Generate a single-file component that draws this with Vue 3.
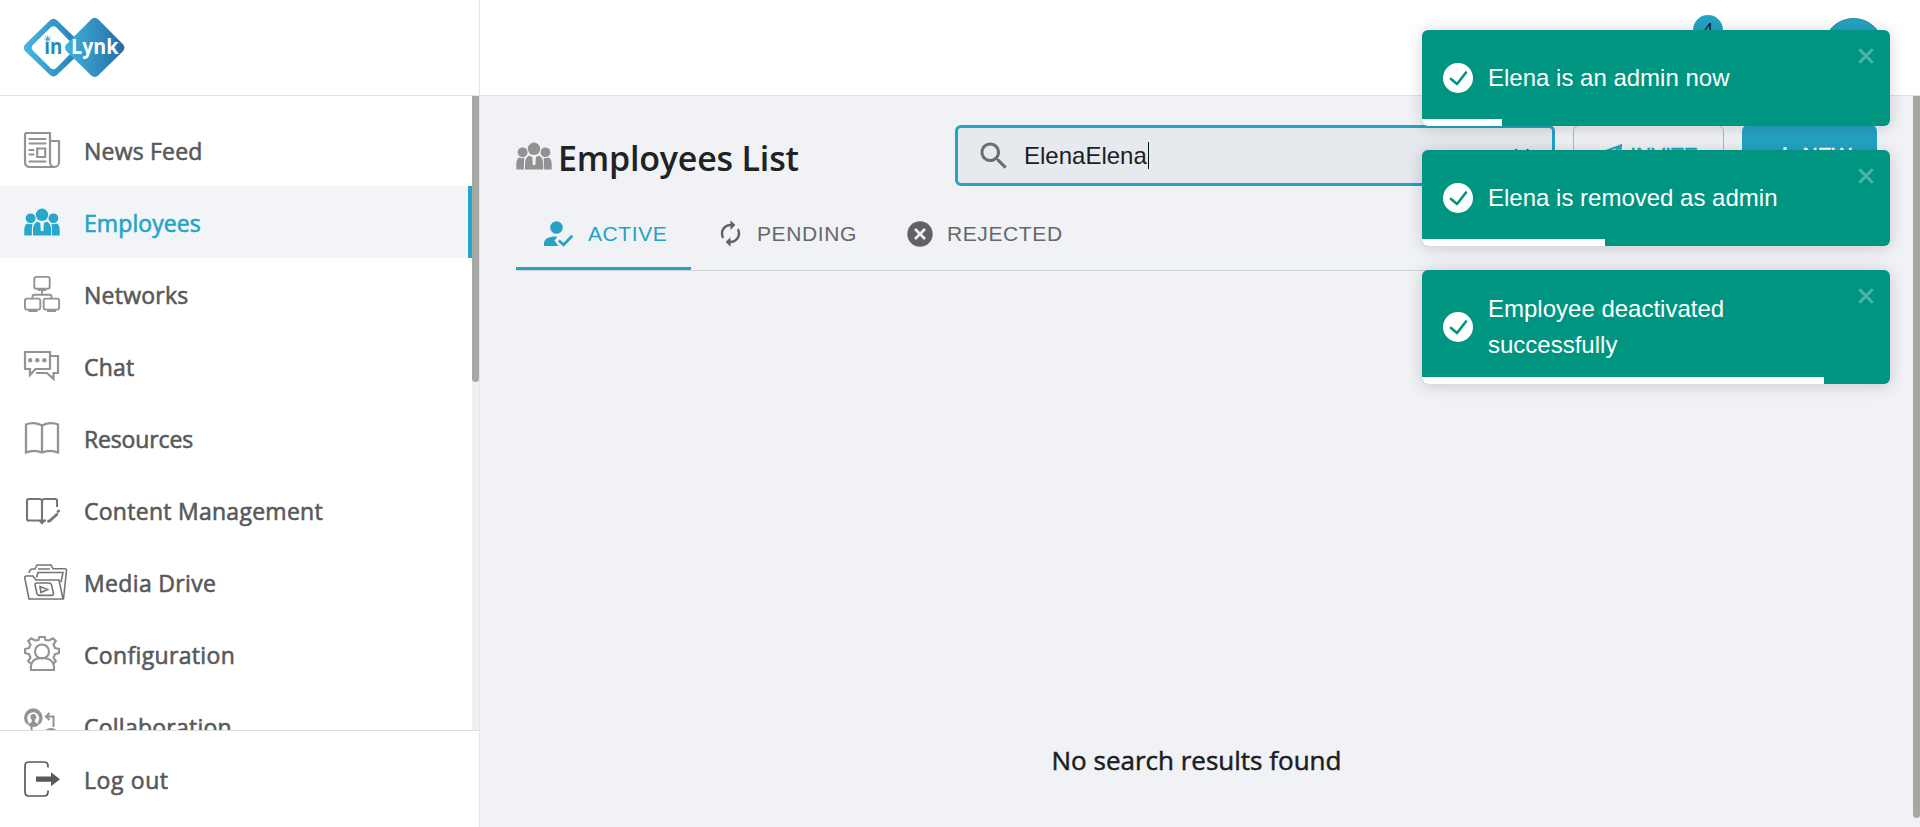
<script setup>
const nav = [
  { id: 'news', label: 'News Feed', ls: 0.2 },
  { id: 'people', label: 'Employees', ls: 0.08 },
  { id: 'net', label: 'Networks', ls: 0.25 },
  { id: 'chat', label: 'Chat', ls: 0.2 },
  { id: 'book', label: 'Resources', ls: -0.15 },
  { id: 'content', label: 'Content Management', ls: 0.27 },
  { id: 'media', label: 'Media Drive', ls: 0.35 },
  { id: 'config', label: 'Configuration', ls: 0.34 },
  { id: 'collab', label: 'Collaboration', ls: 0.24 },
]
const toasts = [
  { text: 'Elena is an admin now', bar: 80 },
  { text: 'Elena is removed as admin', bar: 183 },
  { text: 'Employee deactivated successfully', bar: 402 },
]
</script>

<template>
  <div class="app">
    <svg class="defs" width="0" height="0">
      <defs>
        <symbol id="people" viewBox="0 0 36 36">
          <g fill="currentColor">
            <circle cx="18" cy="10.8" r="6.2" /><circle cx="6.6" cy="14.3" r="4.9" /><circle cx="29.4" cy="14.3" r="4.9" />
            <path d="M.3 31.500V26c0-3.500 1.200-6 3.200-6.600 1.500 1 3.500 1 5 .3C8 22 7.900 25 7.900 31.500z" />
            <path d="M35.700 31.500V26c0-3.500-1.200-6-3.200-6.600-1.500 1-3.500 1-5 .3C28 22 28.100 25 28.100 31.500z" />
            <path d="M9 31.500V26.500c0-5 1.800-8 4.600-8.700l2.700 1.200.5 8h2.600l.5-8 2.700-1.200C25.400 18.500 27.200 21.500 27.200 26.500v5z" />
          </g>
        </symbol>
      </defs>
    </svg>
    <aside class="side">
      <div class="brand">
        <svg width="102" height="62" viewBox="0 0 102 62">
          <defs>
            <linearGradient id="g1" x1="0" x2="1"><stop offset="0" stop-color="#43b9df" /><stop offset="1" stop-color="#2778b1" /></linearGradient>
            <linearGradient id="g2" x1="0" x2="1"><stop offset="0" stop-color="#41b4db" /><stop offset="1" stop-color="#256ba6" /></linearGradient>
          </defs>
          <path d="M25.800 3.500q3.700-3.300 7.400 0L57.500 27q3.500 3.700 0 7.400L33.200 57.800q-3.700 3.300-7.400 0L1.500 34.400q-3.500-3.700 0-7.400z" fill="url(#g1)" />
          <path d="M26.600 10.500q2.900-2.500 5.800 0L49.500 28q2.300 2.700 0 5.400L32.400 51q-2.900 2.500-5.800 0L8.800 33.400q-2.300-2.700 0-5.400z" fill="#fff" />
          <path d="M67 2.500q3.700-3.500 7.400 0L98.700 27q3.500 3.700 0 7.400L74.400 58.200q-3.700 3.500-7.400 0L42.700 34.400q-3.500-3.700 0-7.400z" fill="url(#g2)" />
          <circle cx="23.600" cy="22" r="1.800" fill="#2b8fc2" />
          <path d="M23.600 18v8M19.800 22h7.600M21 19l5.300 6M26.300 19l-5.300 6" stroke="#69a9c9" stroke-width=".7" />
          <text x="20.300" y="36.500" class="logo in" textLength="18" lengthAdjust="spacingAndGlyphs">ın</text>
          <text x="47" y="36.500" class="logo" textLength="47.500" lengthAdjust="spacingAndGlyphs">Lynk</text>
        </svg>
      </div>
      <div class="navwrap">
        <nav>
          <a v-for="n in nav" :key="n.id" class="item" :class="{ active: n.id === 'people' }">
            <span class="ico">
              <svg v-if="n.id === 'news'" width="36" height="36" fill="none" stroke="currentColor" stroke-width="2.200">
                <path d="M1 1h25v29c0 3 2 5 4.500 5S35 33 35 30V9h-9M1 1v29c0 3 2 5 5 5h25" /><path d="M5.500 7h16M5.500 11.500h16M5.500 18h4M5.500 22.500h4M5.500 29.500h16M13.200 16.500h8v8.500h-8z" stroke-linecap="round" />
              </svg>
              <svg v-else-if="n.id === 'people'" width="36" height="36"><use href="#people" /></svg>
              <svg v-else-if="n.id === 'net'" width="36" height="36" fill="none" stroke="currentColor" stroke-width="1.900">
                <rect x="10.300" y=".9" width="15.400" height="11.800" rx="2" /><rect x=".9" y="22.600" width="15.400" height="11" rx="2" /><rect x="19.700" y="22.600" width="15.400" height="11" rx="2" /><path d="M14 14h8M18 14v5M8.500 22v-1.500q0-1.700 1.700-1.700h15.600q1.700 0 1.700 1.700V22M4.500 35h9M23 35h9" />
              </svg>
              <svg v-else-if="n.id === 'chat'" width="36" height="36" fill="none" stroke="currentColor" stroke-width="2.200">
                <path d="M1 4h25v17H11.500L6 27v-6H1zM27 8h7v17h-4.500v6L23 25H12" /><g fill="currentColor" stroke="none"><circle cx="6.200" cy="12.300" r="2.200" /><circle cx="13.300" cy="12.300" r="2.200" /><circle cx="20.400" cy="12.300" r="2.200" /></g>
              </svg>
              <svg v-else-if="n.id === 'book'" width="36" height="36" fill="none" stroke="currentColor" stroke-width="2.300">
                <path d="M18 5.500C13 2.500 6 2.500 2 4.500v28c5-2 11-2 16 0 5-2 11-2 16 0V4.500C30 2.500 23 2.500 18 5.500zv27" />
              </svg>
              <svg v-else-if="n.id === 'content'" class="dark" width="36" height="36" fill="none" stroke="currentColor" stroke-width="2.100">
                <path d="M33 15V8.500Q33 7 31.500 7H21q-3 0-3 2v22M18 9q0-2-3-2H5Q3 7 3 8.500V27q0 1.500 1.500 1.500H22M16 29l2 2 2-2" /><path d="M24.500 29.200l1.300-.4 7-6.300M34 19.500l.6-.5" stroke-width="2.800" stroke-linecap="round" />
              </svg>
              <svg v-else-if="n.id === 'media'" class="dark" width="44" height="36" fill="none" stroke="currentColor" stroke-width="1.600">
                <path d="M5 35 .8 14q-.3-2 1.700-2h6.500l3 4h23l4 19zM39.500 35 42.500 6.500q0-1.700-1.700-1.700H29L27 1H13l-2 4H8.500Q6 5 5 9M14 5h12M12.500 13.500 14 8.500h25l-2 9.500M13 19h12q2 0 2.500 1.700l2 9q.3 1.700-1.700 1.700H15.500q-2 0-2.500-1.700l-2-9Q11 19 13 19zM16 22.500l7.500 3-6.500 3z" />
              </svg>
              <svg v-else-if="n.id === 'config'" width="36" height="36" fill="none" stroke="currentColor" stroke-width="2.100">
                <path d="M6.500 27.500l-2.300-2.300 2.300-3.500-1.500-3.500L1 17v-4l4-1 1.500-3.300-2.300-3.700 3-2.700L11 4.500 14.500 4l.8-3h5.400l.8 3L25 4.500l3.800-2.200 3 2.700-2.300 3.700L31 12l4 1v4l-4 1.200-1.500 3.500 2.300 3.500-2.300 2.300" />
                <circle cx="18" cy="15.500" r="7" /><path d="M7 34c-1-8 3-12 11-12S31 26 30 34z" />
              </svg>
              <svg v-else width="36" height="36">
                <path d="M3 16.500A9.300 9.300 0 1 1 15.600 16.500L13.500 14.500A6 6 0 1 0 5 14.500z" fill="currentColor" /><circle cx="9.300" cy="9" r="3" fill="currentColor" /><path d="M7.800 10h3v4l4.500 2.500q-6 5-12 0L7.800 14zM18 35q0-15 9-15t9 15z" fill="currentColor" /><path d="M7.500 18v8M22 8.500h7.500V19M25.500 5 22 8.500l3.500 3.500" fill="none" stroke="currentColor" stroke-width="2" />
              </svg>
            </span>
            <span class="lbl" :style="{ letterSpacing: n.ls + 'px' }">{{ n.label }}</span>
          </a>
        </nav>
        <div class="track"><div class="thumb"></div></div>
      </div>
      <div class="logout">
        <svg width="36" height="36" fill="none" stroke="currentColor" stroke-width="1.700">
          <path d="M24 6.500V5q0-4-4-4H5Q1 1 1 5v26q0 4 4 4h15q4 0 4-4v-1.500" /><path d="M12 15.500h15v-4.300l9 7-9 7v-4.400H12z" fill="currentColor" stroke="none" />
        </svg>
        <span class="lbl">Log out</span>
      </div>
    </aside>
    <section class="main">
      <header class="top"><div class="avatar"></div><div class="badge">4</div></header>
      <div class="body">
        <div class="content">
          <div class="head">
            <h1><svg width="36" height="36"><use href="#people" /></svg><span>Employees List</span></h1>
            <div class="search">
              <svg width="36" height="36" viewBox="0 0 24 24" fill="#6b6d6f"><path d="M15.500 14h-.79l-.28-.27C15.410 12.590 16 11.110 16 9.500 16 5.910 13.090 3 9.500 3S3 5.910 3 9.500 5.910 16 9.500 16c1.610 0 3.090-.59 4.230-1.570l.27.28v.79l5 4.990L20.490 19l-4.990-5zm-6 0C7.010 14 5 11.990 5 9.500S7.010 5 9.500 5 14 7.010 14 9.500 11.990 14 9.500 14z" /></svg>
              <span class="query">ElenaElena</span><i class="caret"></i>
              <svg class="clear" width="16" height="16" stroke="#222" stroke-width="2"><path d="m1.500 1.500 13 13M14.500 1.500l-13 13" /></svg>
            </div>
            <button class="invite"><svg width="20" height="24" fill="none" stroke="currentColor" stroke-width="2.200"><path d="M19 1.500 1 8l6 5L19 1.500 16 21l-6-4-3 5V13" /></svg><span>INVITE</span></button>
            <button class="new"><svg width="14" height="18" stroke="currentColor" stroke-width="3"><path d="M7 0v16M0 8h14" /></svg><span>NEW</span></button>
          </div>
          <div class="tabs">
            <div class="tab on">
              <svg width="30" height="26" fill="currentColor"><circle cx="12.500" cy="6.500" r="6.300" /><path d="M0 25v-2.500C0 18 5 15.500 11 15.500l2.500.2-3 3.800 4 5.500z" /><path d="m14.800 19.500 4.800 4.300 8.700-9" fill="none" stroke="currentColor" stroke-width="2.700" /></svg>
              <span>ACTIVE</span>
            </div>
            <div class="tab two">
              <svg width="29" height="29" viewBox="0 0 24 24" fill="currentColor"><path d="M12 6v3l4-4-4-4v3c-4.420 0-8 3.580-8 8 0 1.570.46 3.030 1.240 4.260L6.700 14.800c-.45-.83-.7-1.790-.7-2.800 0-3.310 2.690-6 6-6zm6.760 1.740L17.300 9.200c.44.84.7 1.790.7 2.800 0 3.310-2.690 6-6 6v-3l-4 4 4 4v-3c4.420 0 8-3.580 8-8 0-1.570-.46-3.030-1.240-4.260z" /></svg>
              <span>PENDING</span>
            </div>
            <div class="tab three">
              <svg width="26" height="26"><circle cx="13" cy="13" r="12.700" fill="currentColor" /><path d="m8 8 10 10M18 8 8 18" stroke="#f0f2f6" stroke-width="2.600" /></svg>
              <span>REJECTED</span>
            </div>
          </div>
          <p class="empty">No search results found</p>
        </div>
        <div class="pagebar"></div>
      </div>
    </section>
    <div class="toasts">
      <div v-for="t in toasts" :key="t.text" class="toast">
        <svg class="ok" width="30" height="30"><circle cx="15" cy="15" r="15" fill="#fff" /><path d="m8 16 6 5L23 9.500" fill="none" stroke="#009580" stroke-width="2.600" stroke-linecap="round" stroke-linejoin="round" /></svg>
        <span class="msg">{{ t.text }}</span>
        <svg class="x" width="16" height="16" stroke="#4db5a6" stroke-width="3"><path d="m1.300 1.300 13.400 13.400M14.700 1.300 1.300 14.700" /></svg>
        <div class="bar" :style="{ width: t.bar + 'px' }"></div>
      </div>
    </div>
  </div>
</template>

<style>
body { margin: 0; overflow: hidden; }
</style>
<style scoped>
* { box-sizing: border-box; }
.app { position: relative; display: flex; width: 1920px; height: 827px; overflow: hidden; background: #fff; font-family: "Liberation Sans", Arial, sans-serif; }
.defs { position: absolute; }
.side { width: 480px; height: 827px; display: flex; flex-direction: column; border-right: 1px solid #e4e5e7; font-family: "Open Sans", "Noto Sans", sans-serif; font-weight: 400; font-size: 23px; color: #58595b; }
.brand { height: 96px; border-bottom: 1px solid #dfe0e1; padding: 17px 0 0 24px; flex: none; }
.brand svg { display: block; }
.logo { font: 700 21px "Open Sans", sans-serif; fill: #fff; }
.in { fill: #2587bd; }
.navwrap { height: 634px; flex: none; display: flex; overflow: hidden; }
nav { flex: 1; padding-top: 18px; }
.item { height: 72px; display: flex; align-items: center; padding-left: 24px; }
.item.active { background: #f2f4f8; color: #23a5c7; border-right: 4px solid #23a5c7; }
.lbl { padding-top: 2px; -webkit-text-stroke: .6px currentColor; white-space: nowrap; }
.ico { width: 60px; height: 36px; color: #939393; }
.active .ico { color: #27a8cb; }
.ico svg { display: block; overflow: visible; }
.ico .dark { color: #757575; }
.track { width: 7px; background: #f0f0f0; }
.thumb { height: 286px; background: #a5a7a5; border-radius: 0 0 4px 4px; }
.logout { flex: 1; border-top: 1px solid #dcddde; display: flex; align-items: center; gap: 24px; padding-left: 24px; letter-spacing: .6px; }
.main { flex: 1; display: flex; flex-direction: column; }
.top { height: 96px; border-bottom: 1px solid #dfe0e3; position: relative; flex: none; }
.badge { position: absolute; left: 1213px; top: 15px; width: 30px; height: 30px; border-radius: 50%; background: #25a3c5; font-size: 19px; line-height: 30px; text-align: center; color: #1f2325; }
.avatar { position: absolute; left: 1343px; top: 18px; width: 61px; height: 61px; border-radius: 50%; background: #25a3c5; border: 1px solid #278aa8; }
.body { flex: 1; display: flex; background: #f0f2f6; }
.content { flex: 1; padding: 29px 36px 0; }
.pagebar { width: 7px; height: 722px; background: #a5a7a5; border-radius: 0 0 4px 4px; }
.head { display: flex; height: 61px; }
h1 { margin: 0; width: 439px; display: flex; align-items: center; gap: 6px; font: 600 34px "Open Sans", "Noto Sans", sans-serif; letter-spacing: -.2px; color: #212224; white-space: nowrap; }
h1 svg { color: #929292; margin-top: 1px; }
h1 span { padding-top: 5px; }
.search { width: 600px; height: 61px; border: 3px solid #24a4c6; border-radius: 6px; background: #e6e9ee; display: flex; align-items: center; padding: 0 22px 0 18px; color: #1e2022; font-size: 24px; }
.search svg:first-child { margin: 0 12px 0 0; }
.query { line-height: 28px; }
.caret { width: 1px; height: 27px; background: #111; margin-left: 1px; }
.clear { margin-left: auto; }
button { height: 61px; border-radius: 6px; font: 400 21px "Liberation Sans", Arial, sans-serif; display: flex; align-items: center; justify-content: center; }
button span { padding-bottom: 1px; -webkit-text-stroke: .5px currentColor; }
.invite { width: 151px; margin-left: 18px; border: 1px solid #8cc9db; background: transparent; color: #25a3c5; gap: 8px; padding: 0 0 0 3px; }
.new { width: 135px; margin-left: 18px; border: 0; background: #25a3c5; color: #fff; gap: 11px; padding: 0 0 0 10px; }
.tabs { display: flex; height: 85px; width: 1361px; border-bottom: 1px solid #d0d3d7; color: #666769; font-size: 21px; letter-spacing: .6px; }
.tab { display: flex; align-items: center; padding-top: 11px; }
.tab svg { color: #606264; }
.on, .on svg { color: #25a3c5; }
.on { width: 175px; padding-left: 28px; border-bottom: 3px solid #25a3c5; padding-top: 14px; gap: 14px; }
.two { padding-left: 25px; gap: 12px; width: 188px; }
.three { padding-left: 28px; gap: 14px; }
.empty { margin: 471px 0 0; text-align: center; font: 400 26px/36px "Open Sans", "Noto Sans", sans-serif; -webkit-text-stroke: .5px currentColor; color: #1c1d1f; }
.toasts { position: absolute; left: 1422px; top: 30px; width: 468px; display: flex; flex-direction: column; gap: 24px; }
.toast { position: relative; min-height: 96px; padding: 21px 48px 21px 21px; display: flex; align-items: center; border-radius: 6px; background: #009580; color: #fff; font-size: 24px; line-height: 36px; overflow: hidden; box-shadow: 0 1px 15px rgba(0,0,0,.12), 0 3px 22px rgba(0,0,0,.06); }
.ok { flex: none; margin-right: 15px; }
.msg { max-width: 300px; }
.x { position: absolute; right: 16px; top: 18px; }
.bar { position: absolute; left: 0; bottom: 0; height: 7px; background: #fff; }
</style>
